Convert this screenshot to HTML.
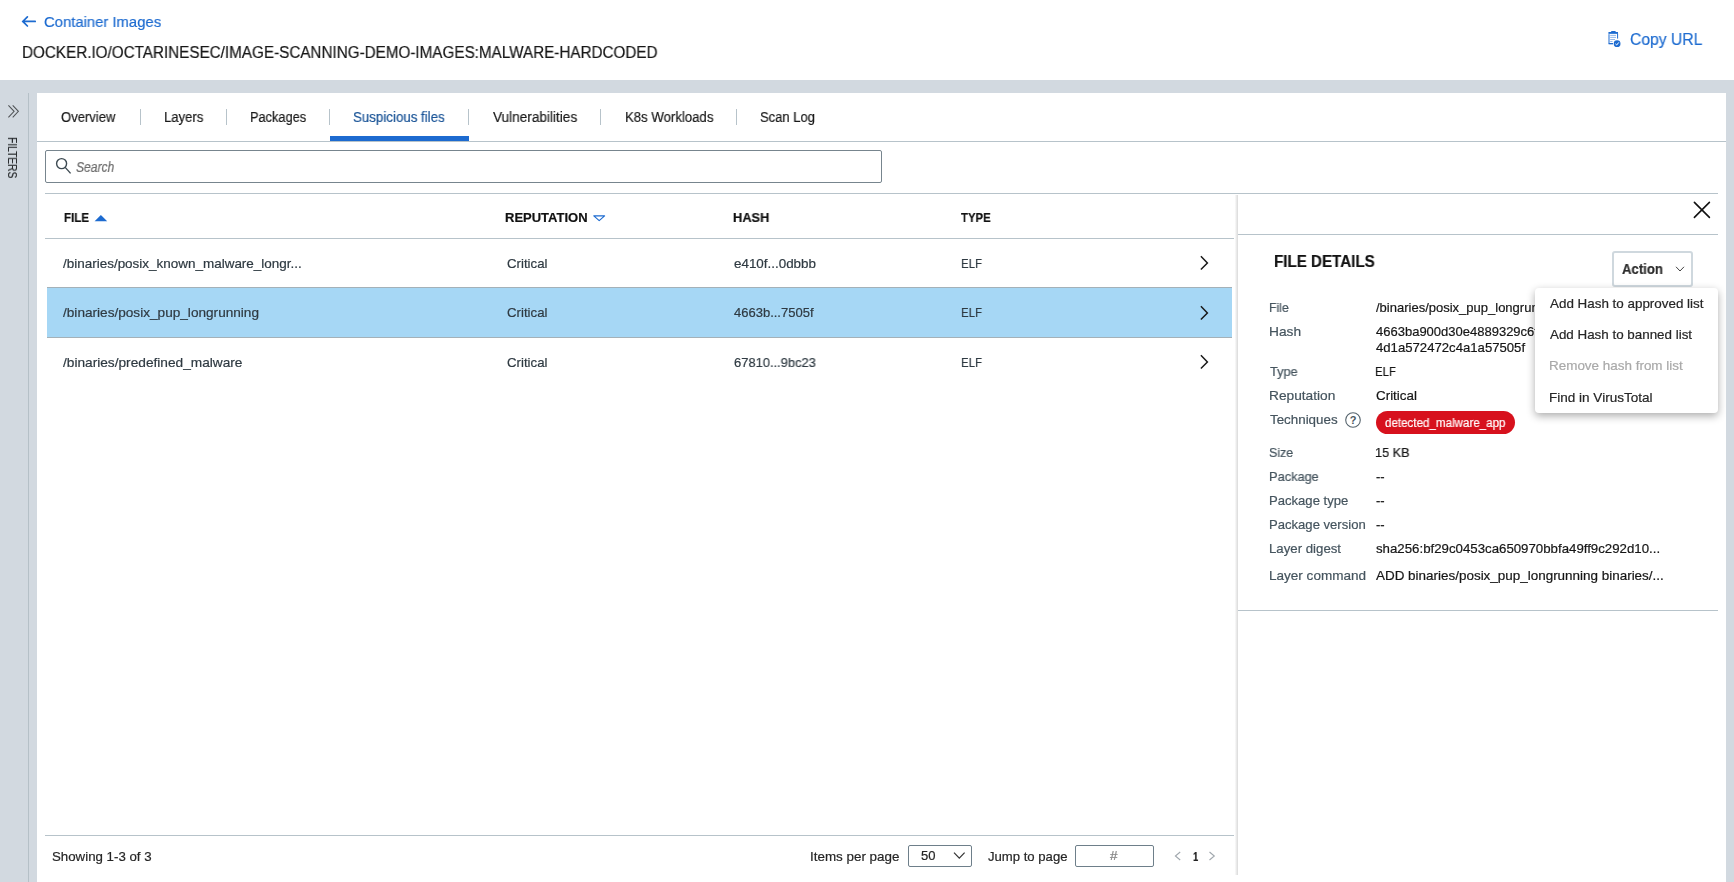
<!DOCTYPE html>
<html><head><meta charset="utf-8">
<style>
html,body{margin:0;padding:0}
body{width:1734px;height:882px;overflow:hidden;position:relative;background:#d2d9e0;font-family:"Liberation Sans",sans-serif}
.a{position:absolute}
.t{position:absolute;white-space:pre;font-family:"Liberation Sans",sans-serif;-webkit-text-stroke:0.2px currentColor;will-change:transform}
.ln{position:absolute;background:#b7c3ca}
</style></head><body>
<!-- header -->
<div class="a" style="left:0;top:0;width:1734px;height:80px;background:#fff"></div>
<svg class="a" style="left:20px;top:14px" width="18" height="16" viewBox="0 0 18 16"><path d="M2.8 7.4H15.2M7.4 2.8L2.8 7.4L7.4 12" fill="none" stroke="#1d6bd0" stroke-width="1.7" stroke-linecap="round"/></svg>
<!-- copy icon -->
<svg class="a" style="left:1602px;top:26px" width="24" height="24" viewBox="0 0 24 24">
 <path d="M7 8.2V17.6H11" fill="none" stroke="#1d6bd0" stroke-width="1"/>
 <path d="M6.5 6.8H16V7.6H6.5Z" fill="#1d6bd0"/>
 <rect x="6.5" y="6" width="9.5" height="1.6" fill="#1d6bd0"/>
 <rect x="9.1" y="5" width="4.6" height="1.5" rx="0.6" fill="#1d6bd0"/>
 <path d="M15.6 7.5V12.6" stroke="#1d6bd0" stroke-width="1"/>
 <path d="M6.5 17.7H11" stroke="#1d6bd0" stroke-width="1.1"/>
 <path d="M8.2 9.4H14M8.2 11.4H14M8.2 13.5H13M8.2 15.5H10.5" stroke="#7aa6e3" stroke-width="0.8"/>
 <circle cx="15.1" cy="17.7" r="3.4" fill="#1d6bd0"/>
 <path d="M13.4 17.8L14.7 19L16.8 16.4" fill="none" stroke="#fff" stroke-width="1"/>
</svg>
<!-- sidebar -->
<div class="a" style="left:28px;top:93px;width:1px;height:789px;background:#b5c0c7"></div>
<svg class="a" style="left:0;top:98px" width="28" height="28" viewBox="0 0 28 28"><path d="M8.4 7.3L14.1 13.3L8.4 19.4M12.7 7.3L18.4 13.3L12.7 19.4" fill="none" stroke="#505356" stroke-width="1.05"/></svg>
<div class="t" style="left:17.5px;top:137px;font-size:12px;line-height:12px;color:#2a2d30;transform:rotate(90deg) scaleX(0.855);transform-origin:0 0">FILTERS</div>
<!-- main panel -->
<div class="a" style="left:37px;top:93px;width:1689px;height:789px;background:#fff"></div>
<div class="ln" style="left:37px;top:141px;width:1689px;height:1px"></div>
<div class="ln" style="left:140px;top:109px;width:1px;height:16px"></div>
<div class="ln" style="left:226px;top:109px;width:1px;height:16px"></div>
<div class="ln" style="left:329px;top:109px;width:1px;height:16px"></div>
<div class="ln" style="left:468px;top:109px;width:1px;height:16px"></div>
<div class="ln" style="left:600px;top:109px;width:1px;height:16px"></div>
<div class="ln" style="left:736px;top:109px;width:1px;height:16px"></div>
<div class="a" style="left:330px;top:136px;width:139px;height:5px;background:#1d6bd0"></div>
<!-- search -->
<div class="a" style="left:45px;top:150px;width:835px;height:31px;border:1px solid #77858e;border-radius:2px"></div>
<svg class="a" style="left:50px;top:152px" width="30" height="28" viewBox="0 0 30 28"><circle cx="11.6" cy="11.6" r="5" fill="none" stroke="#3d4a52" stroke-width="1.4"/><path d="M15.2 15.4L20.6 21.4" stroke="#3d4a52" stroke-width="1.4"/></svg>
<!-- table -->
<div class="ln" style="left:45px;top:193px;width:1673px;height:1px"></div>
<div class="ln" style="left:45px;top:238px;width:1189px;height:1px"></div>
<svg class="a" style="left:94px;top:214px" width="14" height="8" viewBox="0 0 14 8"><path d="M0.6 7.2L6.9 0.9L13.2 7.2Z" fill="#1d6bd0"/></svg>
<svg class="a" style="left:592px;top:213px" width="14" height="9" viewBox="0 0 14 9"><path d="M1.8 2.9H12.6L7.2 7.6Z" fill="none" stroke="#1d6bd0" stroke-width="1.15" stroke-linejoin="round"/></svg>
<div class="a" style="left:47px;top:287px;width:1185px;height:49px;background:#a6d7f5;border-top:1px solid #a4b1b8;border-bottom:1px solid #a4b1b8"></div>
<svg class="a" style="left:1190px;top:250px" width="30" height="30" viewBox="0 0 30 30"><path d="M10.9 6.3L17.4 12.9L10.9 19.6" fill="none" stroke="#1a1a1a" stroke-width="1.5"/></svg>
<svg class="a" style="left:1190px;top:299.5px" width="30" height="30" viewBox="0 0 30 30"><path d="M10.9 6.3L17.4 12.9L10.9 19.6" fill="none" stroke="#1a1a1a" stroke-width="1.5"/></svg>
<svg class="a" style="left:1190px;top:349px" width="30" height="30" viewBox="0 0 30 30"><path d="M10.9 6.3L17.4 12.9L10.9 19.6" fill="none" stroke="#1a1a1a" stroke-width="1.5"/></svg>
<!-- footer -->
<div class="ln" style="left:45px;top:835px;width:1189px;height:1px"></div>
<div class="a" style="left:908px;top:845px;width:62px;height:20px;border:1px solid #6e7f8a;border-radius:2px"></div>
<svg class="a" style="left:950px;top:848px" width="18" height="14" viewBox="0 0 18 14"><path d="M4 4.7L9.3 10.2L14.6 4.7" fill="none" stroke="#333" stroke-width="1.2"/></svg>
<div class="a" style="left:1075px;top:845px;width:77px;height:20px;border:1px solid #6e7f8a;border-radius:2px"></div>
<svg class="a" style="left:1170px;top:848px" width="14" height="16" viewBox="0 0 14 16"><path d="M10.2 4L5.4 8L10.2 12" fill="none" stroke="#a0a7ad" stroke-width="1.1"/></svg>
<svg class="a" style="left:1204px;top:848px" width="14" height="16" viewBox="0 0 14 16"><path d="M5.5 4L10.3 8L5.5 12" fill="none" stroke="#a0a7ad" stroke-width="1.1"/></svg>
<!-- detail panel -->
<div class="a" style="left:1235px;top:195px;width:3px;height:680px;background:linear-gradient(to right,#fbfbfb,#ececec 45%,#d9d9d9)"></div>
<div class="ln" style="left:1238px;top:234px;width:480px;height:1px"></div>
<div class="ln" style="left:1238px;top:610px;width:480px;height:1px"></div>
<svg class="a" style="left:1690px;top:198px" width="24" height="24" viewBox="0 0 24 24"><path d="M4.4 4.4L19.4 19.4M19.4 4.4L4.4 19.4" stroke="#111" stroke-width="1.6" stroke-linecap="round"/></svg>
<div class="a" style="left:1612px;top:251px;width:77px;height:32px;border:2px solid #cfd8de;border-radius:3px"></div>
<svg class="a" style="left:1672px;top:262px" width="16" height="14" viewBox="0 0 16 14"><path d="M4 4.8L8 9L12 4.8" fill="none" stroke="#444" stroke-width="1"/></svg>
<svg class="a" style="left:1343px;top:410px" width="20" height="20" viewBox="0 0 20 20"><circle cx="10" cy="10" r="7.3" fill="none" stroke="#56646d" stroke-width="1.1"/><text x="10" y="14.2" text-anchor="middle" font-family="Liberation Sans" font-size="11" font-weight="700" fill="#4a5860">?</text></svg>
<div class="a" style="left:1376px;top:411px;width:139px;height:23px;border-radius:12px;background:#d7111d"></div>
<!-- menu -->
<div class="a" style="left:1535px;top:288px;width:183px;height:125px;background:#fff;border-radius:4px;box-shadow:0 3px 8px rgba(0,0,0,0.33);z-index:5;clip-path:inset(-14px -8px -14px -14px)"></div>
<div class='t' style='left:44.10px;top:14.00px;font-size:15px;line-height:15px;font-weight:400;font-style:normal;color:#1d6bd0;transform:scaleX(0.9890);transform-origin:0 0;'>Container Images</div>
<div class='t' style='left:21.90px;top:45.00px;font-size:16px;line-height:16px;font-weight:400;font-style:normal;color:#161616;transform:scaleX(0.9524);transform-origin:0 0;'>DOCKER.IO/OCTARINESEC/IMAGE-SCANNING-DEMO-IMAGES:MALWARE-HARDCODED</div>
<div class='t' style='left:1629.90px;top:31.00px;font-size:16.5px;line-height:16.5px;font-weight:400;font-style:normal;color:#1d6bd0;transform:scaleX(0.9507);transform-origin:0 0;'>Copy URL</div>
<div class='t' style='left:61.10px;top:110.00px;font-size:14px;line-height:14px;font-weight:400;font-style:normal;color:#1a1a1a;transform:scaleX(0.9322);transform-origin:0 0;'>Overview</div>
<div class='t' style='left:163.90px;top:110.00px;font-size:14px;line-height:14px;font-weight:400;font-style:normal;color:#1a1a1a;transform:scaleX(0.9369);transform-origin:0 0;'>Layers</div>
<div class='t' style='left:250.40px;top:110.00px;font-size:14px;line-height:14px;font-weight:400;font-style:normal;color:#1a1a1a;transform:scaleX(0.9134);transform-origin:0 0;'>Packages</div>
<div class='t' style='left:353.20px;top:110.00px;font-size:14px;line-height:14px;font-weight:400;font-style:normal;color:#1a5497;transform:scaleX(0.9505);transform-origin:0 0;'>Suspicious files</div>
<div class='t' style='left:492.70px;top:110.00px;font-size:14px;line-height:14px;font-weight:400;font-style:normal;color:#1a1a1a;transform:scaleX(0.9713);transform-origin:0 0;'>Vulnerabilities</div>
<div class='t' style='left:624.60px;top:110.00px;font-size:14px;line-height:14px;font-weight:400;font-style:normal;color:#1a1a1a;transform:scaleX(0.9420);transform-origin:0 0;'>K8s Workloads</div>
<div class='t' style='left:760.20px;top:110.00px;font-size:14px;line-height:14px;font-weight:400;font-style:normal;color:#1a1a1a;transform:scaleX(0.9298);transform-origin:0 0;'>Scan Log</div>
<div class='t' style='left:76.00px;top:160.00px;font-size:14px;line-height:14px;font-weight:400;font-style:italic;color:#6d6d6d;transform:scaleX(0.8636);transform-origin:0 0;'>Search</div>
<div class='t' style='left:63.70px;top:211.00px;font-size:13px;line-height:13px;font-weight:700;font-style:normal;color:#111;transform:scaleX(0.8857);transform-origin:0 0;'>FILE</div>
<div class='t' style='left:504.90px;top:211.00px;font-size:13px;line-height:13px;font-weight:700;font-style:normal;color:#111;'>REPUTATION</div>
<div class='t' style='left:732.50px;top:211.00px;font-size:13px;line-height:13px;font-weight:700;font-style:normal;color:#111;transform:scaleX(0.9830);transform-origin:0 0;'>HASH</div>
<div class='t' style='left:960.80px;top:211.00px;font-size:13px;line-height:13px;font-weight:700;font-style:normal;color:#111;transform:scaleX(0.8736);transform-origin:0 0;'>TYPE</div>
<div class='t' style='left:63.00px;top:257.00px;font-size:13px;line-height:13px;font-weight:400;font-style:normal;color:#2f3a42;transform:scaleX(1.0357);transform-origin:0 0;'>/binaries/posix_known_malware_longr...</div>
<div class='t' style='left:506.50px;top:257.00px;font-size:13px;line-height:13px;font-weight:400;font-style:normal;color:#2f3a42;transform:scaleX(1.0180);transform-origin:0 0;'>Critical</div>
<div class='t' style='left:734.40px;top:257.00px;font-size:13px;line-height:13px;font-weight:400;font-style:normal;color:#2f3a42;transform:scaleX(1.0304);transform-origin:0 0;'>e410f...0dbbb</div>
<div class='t' style='left:961.30px;top:257.00px;font-size:13px;line-height:13px;font-weight:400;font-style:normal;color:#2f3a42;transform:scaleX(0.8788);transform-origin:0 0;'>ELF</div>
<div class='t' style='left:63.00px;top:306.00px;font-size:13px;line-height:13px;font-weight:400;font-style:normal;color:#2f3a42;transform:scaleX(1.0471);transform-origin:0 0;'>/binaries/posix_pup_longrunning</div>
<div class='t' style='left:506.50px;top:306.00px;font-size:13px;line-height:13px;font-weight:400;font-style:normal;color:#2f3a42;transform:scaleX(1.0180);transform-origin:0 0;'>Critical</div>
<div class='t' style='left:734.40px;top:306.00px;font-size:13px;line-height:13px;font-weight:400;font-style:normal;color:#2f3a42;'>4663b...7505f</div>
<div class='t' style='left:961.30px;top:306.00px;font-size:13px;line-height:13px;font-weight:400;font-style:normal;color:#2f3a42;transform:scaleX(0.8788);transform-origin:0 0;'>ELF</div>
<div class='t' style='left:63.00px;top:356.00px;font-size:13px;line-height:13px;font-weight:400;font-style:normal;color:#2f3a42;transform:scaleX(1.0524);transform-origin:0 0;'>/binaries/predefined_malware</div>
<div class='t' style='left:506.50px;top:356.00px;font-size:13px;line-height:13px;font-weight:400;font-style:normal;color:#2f3a42;transform:scaleX(1.0180);transform-origin:0 0;'>Critical</div>
<div class='t' style='left:734.40px;top:356.00px;font-size:13px;line-height:13px;font-weight:400;font-style:normal;color:#2f3a42;transform:scaleX(0.9927);transform-origin:0 0;'>67810...9bc23</div>
<div class='t' style='left:961.30px;top:356.00px;font-size:13px;line-height:13px;font-weight:400;font-style:normal;color:#2f3a42;transform:scaleX(0.8788);transform-origin:0 0;'>ELF</div>
<div class='t' style='left:1273.70px;top:254.00px;font-size:16px;line-height:16px;font-weight:700;font-style:normal;color:#111;transform:scaleX(0.9467);transform-origin:0 0;'>FILE DETAILS</div>
<div class='t' style='left:1622.20px;top:262.00px;font-size:14px;line-height:14px;font-weight:700;font-style:normal;color:#2b2b2b;transform:scaleX(0.9396);transform-origin:0 0;'>Action</div>
<div class='t' style='left:1269.20px;top:301.00px;font-size:13px;line-height:13px;font-weight:400;font-style:normal;color:#45545e;transform:scaleX(0.9459);transform-origin:0 0;'>File</div>
<div class='t' style='left:1269.20px;top:325.00px;font-size:13px;line-height:13px;font-weight:400;font-style:normal;color:#45545e;transform:scaleX(1.0553);transform-origin:0 0;'>Hash</div>
<div class='t' style='left:1270.20px;top:365.00px;font-size:13px;line-height:13px;font-weight:400;font-style:normal;color:#45545e;transform:scaleX(0.9787);transform-origin:0 0;'>Type</div>
<div class='t' style='left:1269.20px;top:389.00px;font-size:13px;line-height:13px;font-weight:400;font-style:normal;color:#45545e;transform:scaleX(1.0543);transform-origin:0 0;'>Reputation</div>
<div class='t' style='left:1270.20px;top:413.00px;font-size:13px;line-height:13px;font-weight:400;font-style:normal;color:#45545e;transform:scaleX(1.0273);transform-origin:0 0;'>Techniques</div>
<div class='t' style='left:1269.20px;top:446.00px;font-size:13px;line-height:13px;font-weight:400;font-style:normal;color:#45545e;transform:scaleX(0.9583);transform-origin:0 0;'>Size</div>
<div class='t' style='left:1269.20px;top:470.00px;font-size:13px;line-height:13px;font-weight:400;font-style:normal;color:#45545e;transform:scaleX(0.9838);transform-origin:0 0;'>Package</div>
<div class='t' style='left:1269.20px;top:494.00px;font-size:13px;line-height:13px;font-weight:400;font-style:normal;color:#45545e;transform:scaleX(1.0065);transform-origin:0 0;'>Package type</div>
<div class='t' style='left:1269.20px;top:518.00px;font-size:13px;line-height:13px;font-weight:400;font-style:normal;color:#45545e;transform:scaleX(1.0063);transform-origin:0 0;'>Package version</div>
<div class='t' style='left:1269.20px;top:542.00px;font-size:13px;line-height:13px;font-weight:400;font-style:normal;color:#45545e;transform:scaleX(1.0172);transform-origin:0 0;'>Layer digest</div>
<div class='t' style='left:1269.20px;top:569.00px;font-size:13px;line-height:13px;font-weight:400;font-style:normal;color:#45545e;transform:scaleX(1.0413);transform-origin:0 0;'>Layer command</div>
<div class='t' style='left:1376.00px;top:301.00px;font-size:13px;line-height:13px;font-weight:400;font-style:normal;color:#161616;'>/binaries/posix_pup_longrunning</div>
<div class='t' style='left:1376.00px;top:325.00px;font-size:13px;line-height:13px;font-weight:400;font-style:normal;color:#161616;'>4663ba900d30e4889329c6f1e0a8b7c2d5e4f3a2b1</div>
<div class='t' style='left:1376.00px;top:341.00px;font-size:13px;line-height:13px;font-weight:400;font-style:normal;color:#161616;transform:scaleX(1.0108);transform-origin:0 0;'>4d1a572472c4a1a57505f</div>
<div class='t' style='left:1375.00px;top:365.00px;font-size:13px;line-height:13px;font-weight:400;font-style:normal;color:#161616;transform:scaleX(0.8696);transform-origin:0 0;'>ELF</div>
<div class='t' style='left:1376.00px;top:389.00px;font-size:13px;line-height:13px;font-weight:400;font-style:normal;color:#161616;transform:scaleX(1.0309);transform-origin:0 0;'>Critical</div>
<div class='t' style='left:1385.40px;top:417.00px;font-size:12px;line-height:12px;font-weight:400;font-style:normal;color:#ffffff;transform:scaleX(0.9653);transform-origin:0 0;'>detected_malware_app</div>
<div class='t' style='left:1375.00px;top:446.00px;font-size:13px;line-height:13px;font-weight:400;font-style:normal;color:#161616;transform:scaleX(0.9767);transform-origin:0 0;'>15 KB</div>
<div class='t' style='left:1376.00px;top:470.00px;font-size:13px;line-height:13px;font-weight:400;font-style:normal;color:#161616;'>--</div>
<div class='t' style='left:1376.00px;top:494.00px;font-size:13px;line-height:13px;font-weight:400;font-style:normal;color:#161616;'>--</div>
<div class='t' style='left:1376.00px;top:518.00px;font-size:13px;line-height:13px;font-weight:400;font-style:normal;color:#161616;'>--</div>
<div class='t' style='left:1376.00px;top:542.00px;font-size:13px;line-height:13px;font-weight:400;font-style:normal;color:#161616;transform:scaleX(1.0191);transform-origin:0 0;'>sha256:bf29c0453ca650970bbfa49ff9c292d10...</div>
<div class='t' style='left:1376.00px;top:569.00px;font-size:13px;line-height:13px;font-weight:400;font-style:normal;color:#161616;transform:scaleX(1.0343);transform-origin:0 0;'>ADD binaries/posix_pup_longrunning binaries/...</div>
<div class='t' style='left:1549.80px;top:297.00px;font-size:13px;line-height:13px;font-weight:400;font-style:normal;color:#262626;transform:scaleX(1.0309);transform-origin:0 0;z-index:6'>Add Hash to approved list</div>
<div class='t' style='left:1549.80px;top:328.00px;font-size:13px;line-height:13px;font-weight:400;font-style:normal;color:#262626;transform:scaleX(1.0290);transform-origin:0 0;z-index:6'>Add Hash to banned list</div>
<div class='t' style='left:1548.80px;top:359.00px;font-size:13px;line-height:13px;font-weight:400;font-style:normal;color:#a9a9a9;transform:scaleX(1.0341);transform-origin:0 0;z-index:6'>Remove hash from list</div>
<div class='t' style='left:1548.80px;top:391.00px;font-size:13px;line-height:13px;font-weight:400;font-style:normal;color:#262626;transform:scaleX(1.0408);transform-origin:0 0;z-index:6'>Find in VirusTotal</div>
<div class='t' style='left:52.10px;top:850.00px;font-size:13px;line-height:13px;font-weight:400;font-style:normal;color:#262626;transform:scaleX(1.0208);transform-origin:0 0;'>Showing 1-3 of 3</div>
<div class='t' style='left:810.30px;top:850.00px;font-size:13px;line-height:13px;font-weight:400;font-style:normal;color:#262626;transform:scaleX(1.0307);transform-origin:0 0;'>Items per page</div>
<div class='t' style='left:920.80px;top:849.00px;font-size:13px;line-height:13px;font-weight:400;font-style:normal;color:#262626;'>50</div>
<div class='t' style='left:987.80px;top:850.00px;font-size:13px;line-height:13px;font-weight:400;font-style:normal;color:#262626;transform:scaleX(1.0090);transform-origin:0 0;'>Jump to page</div>
<div class='t' style='left:1110.40px;top:850.00px;font-size:12px;line-height:12px;font-weight:400;font-style:normal;color:#808080;transform:scaleX(1.1198);transform-origin:0 0;'>#</div>
<div class='t' style='left:1192.70px;top:850.00px;font-size:13px;line-height:13px;font-weight:700;font-style:normal;color:#222;transform:scaleX(0.7349);transform-origin:0 0;'>1</div>
</body></html>
